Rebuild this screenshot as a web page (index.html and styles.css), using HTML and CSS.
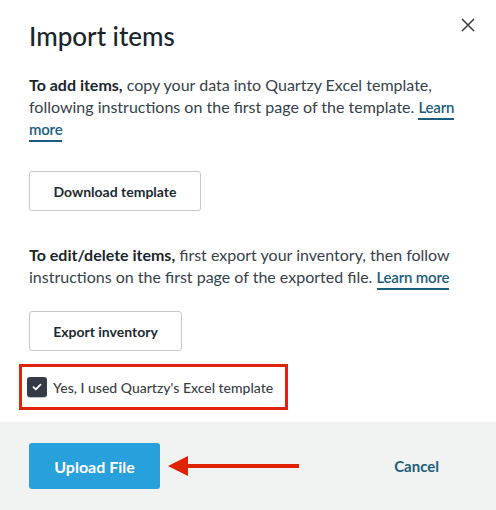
FILE: index.html
```html
<!DOCTYPE html>
<html lang="en">
<head>
<meta charset="utf-8">
<title>Import items</title>
<link rel="stylesheet" href="styles.css">
</head>
<body>
<div class="modal">
  <div class="content">
    <header class="head">
      <h1 class="title">Import items</h1>
      <button class="close" aria-label="Close">
        <svg width="14" height="14" viewBox="0 0 14 14"><path d="M1 1L13 13M13 1L1 13" stroke="#3a3a3a" stroke-width="1.5" fill="none"/></svg>
      </button>
    </header>
    <p class="text"><strong>To add items,</strong> copy your data into Quartzy Excel template, following instructions on the first page of the template. <a class="link" href="#">Learn more</a></p>
    <button class="btn btn-download">Download template</button>
    <p class="text text-edit"><strong>To edit/delete items,</strong> first export your inventory, then follow instructions on the first page of the exported file. <a class="link" href="#">Learn more</a></p>
    <button class="btn btn-export">Export inventory</button>
    <div class="highlight">
      <label class="check">
        <span class="box">
          <svg width="10" height="8" viewBox="0 0 10 8"><path d="M1.5 4.2L3.8 6.3L8.5 1.7" stroke="#fff" stroke-width="1.8" fill="none" stroke-linecap="round" stroke-linejoin="round"/></svg>
        </span>
        <span class="check-label">Yes, I used Quartzy's Excel template</span>
      </label>
    </div>
  </div>
  <footer class="foot">
    <button class="primary">Upload File</button>
    <svg class="arrow" width="132" height="20" viewBox="0 0 132 20"><path d="M0 10L20 0V20Z" fill="#e02200"/><rect x="19" y="8" width="112" height="4" fill="#e02200"/></svg>
    <a class="cancel" href="#">Cancel</a>
  </footer>
</div>
</body>
</html>
```
FILE: styles.css
```css
* { box-sizing: border-box; }
html, body { margin: 0; padding: 0; background: #fff; }
body { font-family: "Lato", "Liberation Sans", sans-serif; color: #2f3b42; }

.modal { width: 496px; height: 510px; display: flex; flex-direction: column; background: #fff; }

.content { padding: 20px 29px 12px; flex: 1; display: flex; flex-direction: column; align-items: flex-start; }

.head { display: flex; justify-content: space-between; align-items: flex-start; width: 100%; }
.title { margin: 0; font-size: 26px; line-height: 32px; font-weight: 500; color: #1a262c; }
.close { border: 0; background: none; padding: 0; margin: -2px -8px 0 0; width: 14px; height: 14px; display: flex; cursor: pointer; }

.text { margin: 22px 0 0; font-size: 16px; line-height: 22px; color: #36424a; }
.text strong { font-weight: 700; color: #1a262c; }
.text-edit { margin-top: 33px; }

.link { color: #1c5d7e; font-size: 15px; font-weight: 600; letter-spacing: -0.2px; text-decoration: none; border-bottom: 2px solid #1c5d7e; padding-bottom: 2px; }

.btn { font-family: inherit; font-size: 14px; font-weight: 700; color: #1d2a30; background: #fff; border: 1px solid #c3c8cc; border-radius: 3px; height: 40px; padding: 0; white-space: nowrap; cursor: pointer; }
.btn-download { margin-top: 31px; width: 172px; }
.btn-export { margin-top: 23px; width: 153px; }

.highlight { margin: 13px 0 0 -10px; border: 3px solid #e1230d; padding: 10px 12px 10px 5px; display: inline-flex; }
.check { display: flex; align-items: center; gap: 6px; cursor: pointer; }
.box { width: 20px; height: 20px; border-radius: 3px; background: #353b46; display: flex; align-items: center; justify-content: center; box-shadow: 0 1px 0 #b9bec4; }
.check-label { font-size: 14px; color: #3a3f45; font-weight: 500; }

.foot { background: #f1f2f2; height: 88px; padding: 0 57px 0 29px; display: flex; align-items: center; }
.primary { font-family: inherit; width: 131px; height: 46px; border: 0; border-radius: 3px; background: #27a0dc; color: #fff; font-size: 16px; font-weight: 700; cursor: pointer; }
.arrow { margin-left: 8px; }
.cancel { margin-left: auto; color: #1c5d7e; font-size: 15px; font-weight: 700; text-decoration: none; }
```
